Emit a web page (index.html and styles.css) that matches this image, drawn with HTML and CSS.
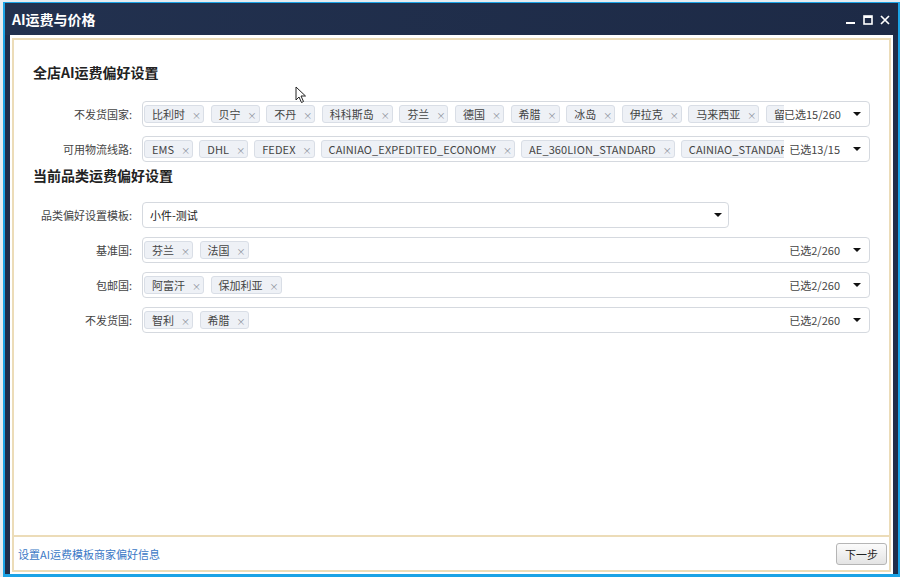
FILE: index.html
```html
<!DOCTYPE html>
<html lang="zh-CN">

<head>
    <meta charset="utf-8">
    <title>AI运费与价格</title>
    <link rel="stylesheet" href="styles.css">
</head>

<body>

    <div class="window">
        <div class="titlebar">
            <span class="title">AI运费与价格</span>
            <div class="controls">
                <svg width="10" height="10" viewBox="0 0 10 10"><rect x="0" y="7" width="9" height="2" fill="#fff"/></svg>
                <svg width="10" height="10" viewBox="0 0 10 10"><rect x="1" y="1" width="8" height="8" fill="none" stroke="#fff" stroke-width="1.6"/><rect x="1" y="1" width="8" height="2" fill="#fff"/></svg>
                <svg width="10" height="10" viewBox="0 0 10 10"><path d="M1 1 L9 9 M9 1 L1 9" stroke="#fff" stroke-width="1.7"/></svg>
            </div>
        </div>

        <div class="client">
            <div class="panel">
                <h2>全店AI运费偏好设置</h2>

                <div class="row">
                    <label>不发货国家:</label>
                    <div class="field wide">
                        <div class="tags">
                            <span class="tag">比利时<i>×</i></span>
                            <span class="tag">贝宁<i>×</i></span>
                            <span class="tag">不丹<i>×</i></span>
                            <span class="tag">科科斯岛<i>×</i></span>
                            <span class="tag">芬兰<i>×</i></span>
                            <span class="tag">德国<i>×</i></span>
                            <span class="tag">希腊<i>×</i></span>
                            <span class="tag">冰岛<i>×</i></span>
                            <span class="tag">伊拉克<i>×</i></span>
                            <span class="tag">马来西亚<i>×</i></span>
                            <span class="tag">留尼汪<i>×</i></span>
                        </div>
                        <span class="count">已选15/260</span>
                        <span class="arrow"></span>
                    </div>
                </div>

                <div class="row">
                    <label>可用物流线路:</label>
                    <div class="field wide">
                        <div class="tags latin">
                            <span class="tag">EMS<i>×</i></span>
                            <span class="tag">DHL<i>×</i></span>
                            <span class="tag">FEDEX<i>×</i></span>
                            <span class="tag">CAINIAO_EXPEDITED_ECONOMY<i>×</i></span>
                            <span class="tag">AE_360LION_STANDARD<i>×</i></span>
                            <span class="tag">CAINIAO_STANDARD<i>×</i></span>
                        </div>
                        <span class="count">已选13/15</span>
                        <span class="arrow"></span>
                    </div>
                </div>

                <h2 class="second">当前品类运费偏好设置</h2>

                <div class="row">
                    <label>品类偏好设置模板:</label>
                    <div class="field select">
                        <span class="value">小件-测试</span>
                        <span class="arrow"></span>
                    </div>
                </div>

                <div class="row">
                    <label>基准国:</label>
                    <div class="field wide">
                        <div class="tags">
                            <span class="tag">芬兰<i>×</i></span>
                            <span class="tag">法国<i>×</i></span>
                        </div>
                        <span class="count">已选2/260</span>
                        <span class="arrow"></span>
                    </div>
                </div>

                <div class="row">
                    <label>包邮国:</label>
                    <div class="field wide">
                        <div class="tags">
                            <span class="tag">阿富汗<i>×</i></span>
                            <span class="tag">保加利亚<i>×</i></span>
                        </div>
                        <span class="count">已选2/260</span>
                        <span class="arrow"></span>
                    </div>
                </div>

                <div class="row">
                    <label>不发货国:</label>
                    <div class="field wide">
                        <div class="tags">
                            <span class="tag">智利<i>×</i></span>
                            <span class="tag">希腊<i>×</i></span>
                        </div>
                        <span class="count">已选2/260</span>
                        <span class="arrow"></span>
                    </div>
                </div>
            </div>

            <div class="footer">
                <a href="#">设置AI运费模板商家偏好信息</a>
                <button>下一步</button>
            </div>
        </div>
    </div>

    <svg class="cursor" width="12" height="18" viewBox="0 0 12 18">
        <path d="M1 1 L1 14 L4 11 L6.5 16.5 L8.5 15.5 L6 10 L10.5 10 Z" fill="#fff" stroke="#222" stroke-width="1"/>
    </svg>

</body>

</html>
```

FILE: styles.css
```css
body {
    margin: 0;
    height: 577px;
    overflow: hidden;
    background-color: #e6ecf1;
    font-family: "Noto Sans CJK SC", sans-serif;
    font-size: 11px;
    color: #333;
    position: relative;
}

.window {
    box-sizing: border-box;
    height: 575px;
    margin: 2px 0 0 3px;
    border: 2px solid #1ba3e6;
    border-top-width: 1px;
    border-bottom-width: 3px;
    background-color: #1f2d4b;
    display: flex;
    flex-direction: column;
}

.titlebar {
    height: 32px;
    flex-shrink: 0;
    display: flex;
    align-items: center;
    justify-content: space-between;
    padding: 0 8px 0 7px;
    background: linear-gradient(to right, #22314f, #1d2a46);
}

.title {
    color: #fff;
    font-weight: bold;
    font-size: 14px;
}

.controls {
    display: flex;
    gap: 7px;
    padding-top: 2px;
}

.client {
    flex: 1;
    margin: 0 5px 0 5px;
    padding: 3px 2px 2px 2px;
    background-color: #fff;
    display: flex;
    flex-direction: column;
}

.panel {
    flex: 1;
    border: 2px solid #ecdcb8;
    padding: 22px 19px 0 19px;
}

h2 {
    margin: 0 0 19px 0;
    font-size: 14px;
    line-height: 20px;
    font-weight: bold;
    color: #222;
}

h2.second {
    margin: -6px 0 17px 0;
}

.row {
    display: flex;
    align-items: center;
    margin-bottom: 9px;
}

.row label {
    width: 99px;
    text-align: right;
    margin-right: 10px;
    color: #444;
}

.field {
    box-sizing: border-box;
    height: 26px;
    border: 1px solid #d5d9df;
    border-radius: 4px;
    display: flex;
    align-items: center;
    padding: 0 0 0 1px;
}

.wide {
    flex: 1;
}

.select {
    width: 587px;
    padding-left: 7px;
}

.select .value {
    flex: 1;
    color: #222;
}

.tags {
    flex: none;
    width: 640px;
    overflow: hidden;
    display: flex;
    gap: 6.6px;
    white-space: nowrap;
}

.tags.latin {
    gap: 6px;
}

.tag {
    flex-shrink: 0;
    box-sizing: border-box;
    height: 18px;
    line-height: 16px;
    padding: 0 6px 0 7px;
    border: 1px solid #d9dee6;
    border-radius: 3px;
    background-color: #eef1f6;
    color: #444;
}

.tag i {
    display: inline-block;
    width: 5px;
    font-style: normal;
    font-size: 9px;
    letter-spacing: 0;
    color: #8a8f99;
    margin-left: 7px;
}

.latin .tag {
    padding: 0 6px 0 7px;
    letter-spacing: 0.1px;
}

.latin .tag i {
    margin-left: 7px;
}

.count {
    flex: none;
    width: 56px;
    white-space: nowrap;
    text-align: right;
    color: #444;
}

.arrow {
    flex: none;
    width: 0;
    height: 0;
    margin: 0 7px 0 13px;
    border-left: 4px solid transparent;
    border-right: 4px solid transparent;
    border-top: 4px solid #111;
}

.select .arrow {
    margin-right: 6px;
}

.footer {
    box-sizing: border-box;
    height: 35px;
    flex-shrink: 0;
    border: 2px solid #ecdcb8;
    border-top: none;
    display: flex;
    align-items: center;
    justify-content: space-between;
    padding: 0 2px 0 4px;
}

.footer a {
    color: #3a78c6;
    text-decoration: none;
}

.footer button {
    width: 51px;
    height: 22px;
    font-family: "Noto Sans CJK SC", sans-serif;
    font-size: 11px;
    color: #222;
    border: 1px solid #b5b5b5;
    border-radius: 3px;
    background: linear-gradient(#fbfbfb, #e4e4e4);
    padding: 0;
}

.cursor {
    position: absolute;
    left: 295px;
    top: 86px;
}
```
